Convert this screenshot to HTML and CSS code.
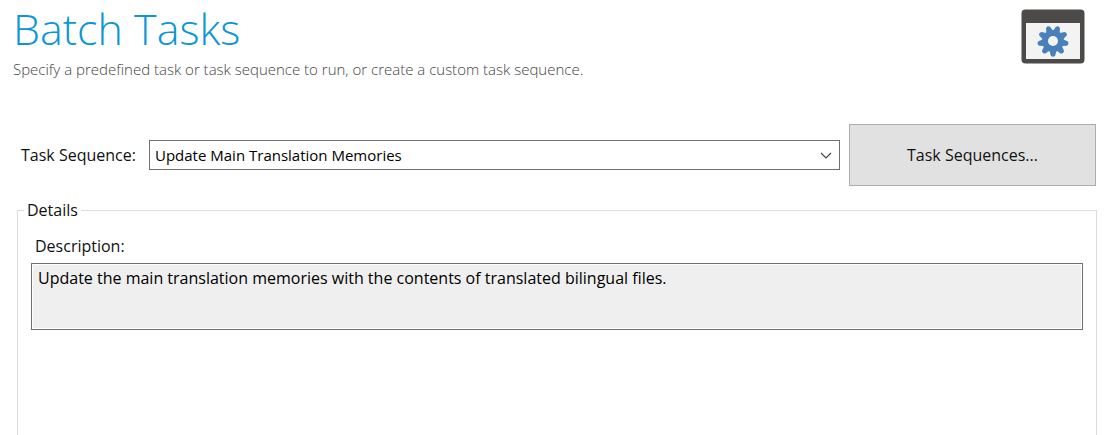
FILE: index.html
```html
<!DOCTYPE html>
<html lang="en">
<head>
    <meta charset="UTF-8">
    <meta name="viewport" content="width=device-width, initial-scale=1.0">
    <title>Batch Tasks</title>
    <link rel="stylesheet" href="styles.css">
</head>
<body>
    <header class="header">
        <div class="header-text">
            <h1 class="title">Batch Tasks</h1>
            <p class="subtitle">Specify a predefined task or task sequence to run, or create a custom task sequence.</p>
        </div>
        <svg class="header-icon" viewBox="0 0 64 55" aria-hidden="true">
            <rect x="0.5" y="0.5" width="63" height="54" rx="4" fill="#4c4b49"/>
            <rect x="5" y="14" width="54" height="36" fill="#f3f3f3"/>
            <g fill="#4a80b9" transform="translate(32 32)">
                <circle r="11"/>
                <g id="teeth">
                    <path id="tooth" d="M-3.4 10 L-2.2 14.4 Q0 17 2.2 14.4 L3.4 10 Z"/>
                    <use href="#tooth" transform="rotate(40)"/>
                    <use href="#tooth" transform="rotate(80)"/>
                </g>
                <use href="#teeth" transform="rotate(120)"/>
                <use href="#teeth" transform="rotate(240)"/>
                <circle r="5" fill="#f3f3f3"/>
            </g>
        </svg>
    </header>

    <main class="content">
        <div class="sequence-row">
            <label class="sequence-label" for="sequence">Task Sequence:</label>
            <div class="select-box">
                <select class="sequence-select" id="sequence">
                    <option>Update Main Translation Memories</option>
                </select>
                <svg class="arrow" viewBox="0 0 12 7" aria-hidden="true">
                    <path d="M1 1 L6 6 L11 1" fill="none" stroke="#444" stroke-width="1.2"/>
                </svg>
            </div>
            <button class="sequence-button" type="button">Task Sequences...</button>
        </div>

        <fieldset class="details">
            <legend class="details-legend">Details</legend>
            <label class="description-label" for="description">Description:</label>
            <textarea class="description" id="description" readonly>Update the main translation memories with the contents of translated bilingual files.</textarea>
        </fieldset>
    </main>
</body>
</html>
```

FILE: styles.css
```css
* {
    box-sizing: border-box;
}

body {
    min-height: 100vh;
    margin: 0;
    display: flex;
    flex-direction: column;
    background: #fff;
    color: #111;
    font-family: "Segoe UI", "Open Sans", "Noto Sans", sans-serif;
    font-size: 16px;
    line-height: 24px;
}

.header {
    display: flex;
    justify-content: space-between;
    align-items: flex-start;
    padding: 0 32px 0 13px;
}

.title {
    margin: 0;
    color: #0a96d7;
    font-size: 43px;
    font-weight: 300;
    line-height: 57px;
}

.subtitle {
    margin: 0;
    color: #444;
    font-size: 15px;
    font-weight: 300;
}

.header-icon {
    width: 64px;
    height: 55px;
    margin-top: 9px;
}

.content {
    flex: 1;
    display: flex;
    flex-direction: column;
    padding: 43px 20px 0 17px;
}

.sequence-row {
    display: flex;
    align-items: center;
    gap: 9px;
    padding: 0 1px 0 4px;
}

.sequence-label {
    width: 119px;
    white-space: nowrap;
}

.select-box {
    position: relative;
    flex: 1;
    display: flex;
}

.sequence-select {
    width: 100%;
    height: 30px;
    padding: 0 32px 0 5px;
    appearance: none;
    border: 1px solid #707070;
    border-radius: 0;
    background: #fff;
    color: #000;
    font: inherit;
    font-size: 15px;
}

.arrow {
    position: absolute;
    top: 12px;
    right: 8px;
    width: 12px;
    height: 7px;
    pointer-events: none;
}

.sequence-button {
    width: 247px;
    height: 62px;
    padding: 0;
    border: 1px solid #adadad;
    background: #e1e1e1;
    color: #111;
    font: inherit;
}

.details {
    flex: 1;
    min-width: 0;
    margin: 12px 0 0;
    padding: 12px 13px 0;
    border: 1px solid #dcdcdc;
    border-bottom: 0;
}

.details-legend {
    margin-left: -7px;
    padding: 0 3px;
}

.description-label {
    display: block;
    padding-left: 4px;
}

.description {
    display: block;
    width: 100%;
    height: 67px;
    margin-top: 5px;
    padding: 2px 6px;
    border: 1px solid #707070;
    border-radius: 0;
    outline: none;
    background: #efefef;
    box-shadow: inset 0 0 0 1px #fff;
    color: #000;
    font: inherit;
    resize: none;
}
```
